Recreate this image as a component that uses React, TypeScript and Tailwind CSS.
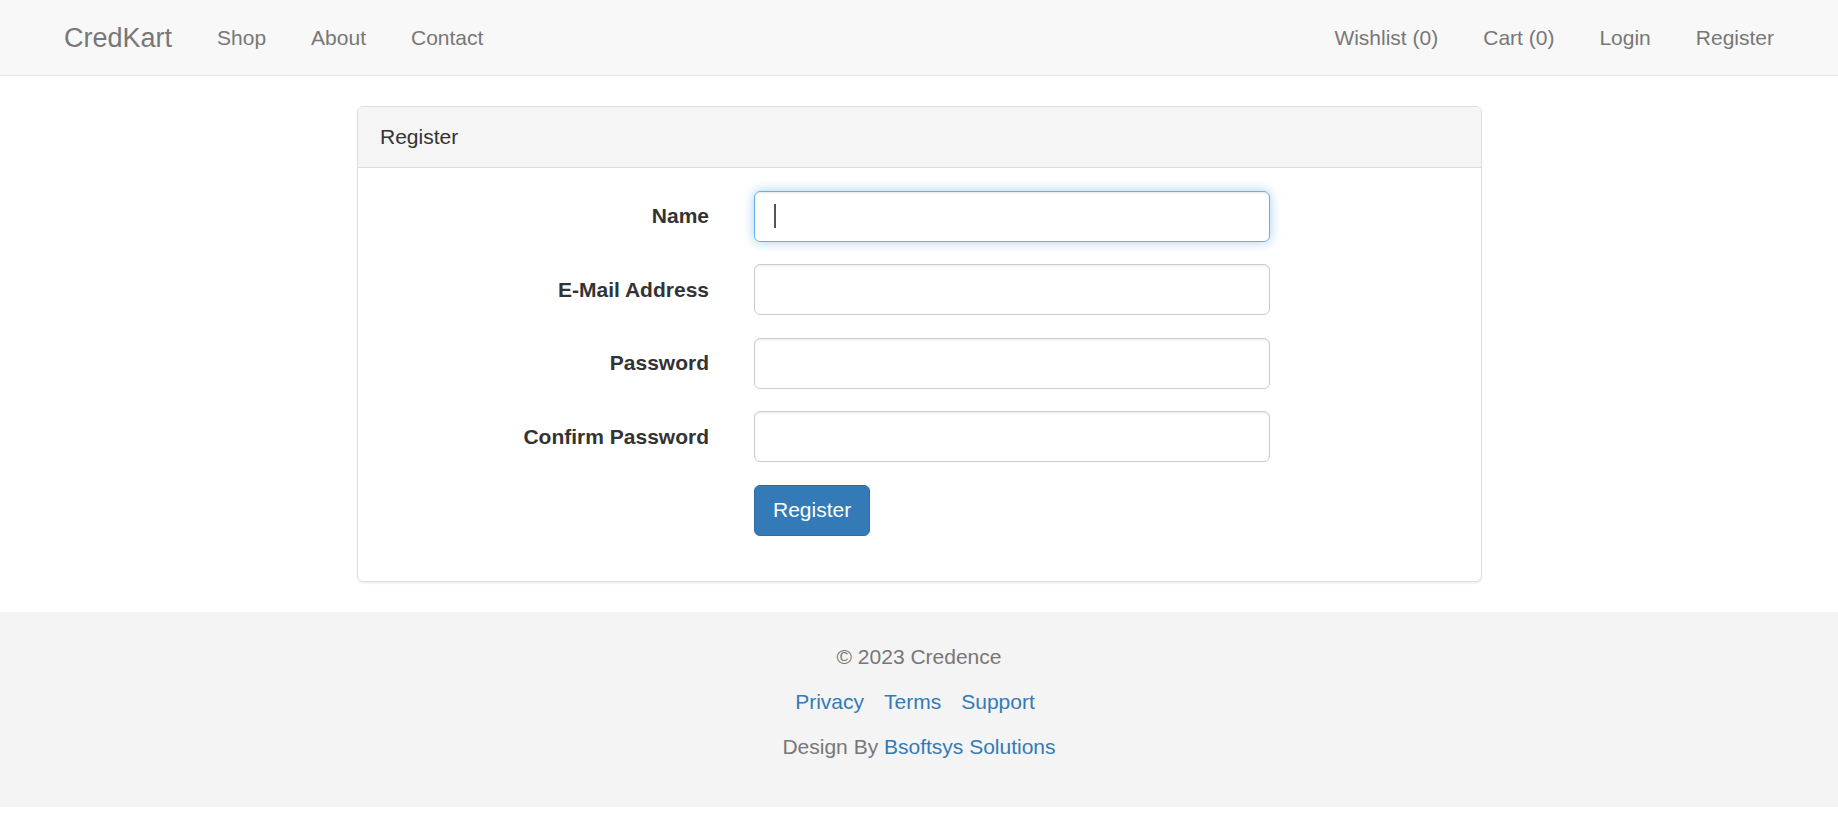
const navLeft = ["Shop", "About", "Contact"]
const navRight = ["Wishlist (0)", "Cart (0)", "Login", "Register"]

const fields = [
  { label: "Name", type: "text", focused: true },
  { label: "E-Mail Address", type: "email", focused: false },
  { label: "Password", type: "password", focused: false },
  { label: "Confirm Password", type: "password", focused: false },
]

export default function App() {
  return (
    <div className="min-h-[837px] bg-white text-[21px] leading-[30px] text-[#333] font-['Liberation_Sans',Arial,sans-serif]">
      {/* navbar */}
      <nav className="h-[76px] border-b border-[#e7e7e7] bg-[#f8f8f8]">
        <div className="mx-auto flex h-[75px] max-w-[1755px] items-center justify-between px-[22.5px]">
          <div className="-ml-[22.5px] flex items-center">
            <a className="px-[22.5px] py-[22.5px] text-[27px] leading-[30px] text-[#777]">CredKart</a>
            {navLeft.map((item) => (
              <a key={item} className="px-[22.5px] py-[22.5px] text-[#777]">
                {item}
              </a>
            ))}
          </div>
          <div className="-mr-[22.5px] flex items-center">
            {navRight.map((item) => (
              <a key={item} className="px-[22.5px] py-[22.5px] text-[#777]">
                {item}
              </a>
            ))}
          </div>
        </div>
      </nav>

      {/* register panel */}
      <div className="mx-auto mt-[30px] w-[1125px]">
        <div className="mb-[30px] rounded-[6px] border border-[#ddd] bg-white shadow-[0_1.5px_1.5px_rgba(0,0,0,0.05)]">
          <div className="rounded-t-[5px] border-b border-[#ddd] bg-[#f5f5f5] px-[22.5px] py-[15px]">Register</div>
          <form className="px-0 py-[22.5px]">
            {fields.map((f) => (
              <div key={f.label} className="mb-[22.5px] flex">
                <label className="w-[374px] px-[22.5px] pt-[10.5px] text-right font-bold">{f.label}</label>
                <div className="relative w-[561px] px-[22.5px]">
                  <input
                    type={f.type}
                    className={
                      f.focused
                        ? "block h-[51px] w-full rounded-[6px] border border-[#66afe9] px-[18px] py-[9px] text-[21px] text-[#555] outline-none shadow-[inset_0_1.5px_1.5px_rgba(0,0,0,0.075),0_0_12px_rgba(102,175,233,0.6)]"
                        : "block h-[51px] w-full rounded-[6px] border border-[#ccc] px-[18px] py-[9px] text-[21px] text-[#555] outline-none shadow-[inset_0_1.5px_1.5px_rgba(0,0,0,0.075)]"
                    }
                  />
                  {f.focused && (
                    <span className="pointer-events-none absolute left-[42px] top-[13px] h-[24px] w-[2px] bg-[#555]" />
                  )}
                </div>
              </div>
            ))}
            <div className="mb-[22.5px] flex">
              <div className="w-[374px]" />
              <div className="px-[22.5px]">
                <button
                  type="button"
                  className="h-[51px] rounded-[6px] border border-[#2e6da4] bg-[#337ab7] px-[18px] text-[21px] leading-[30px] text-white"
                >
                  Register
                </button>
              </div>
            </div>
          </form>
        </div>
      </div>

      {/* footer */}
      <footer className="bg-[#f4f4f4] py-[30px] text-center text-[#777]">
        <p className="mb-[15px]">© 2023 Credence</p>
        <p className="my-[15px] flex justify-center gap-[20px] pr-[8px] text-[#337ab7]">
          <a>Privacy</a>
          <a>Terms</a>
          <a>Support</a>
        </p>
        <p className="my-[15px]">
          Design By <a className="text-[#337ab7]">Bsoftsys Solutions</a>
        </p>
      </footer>
    </div>
  )
}
